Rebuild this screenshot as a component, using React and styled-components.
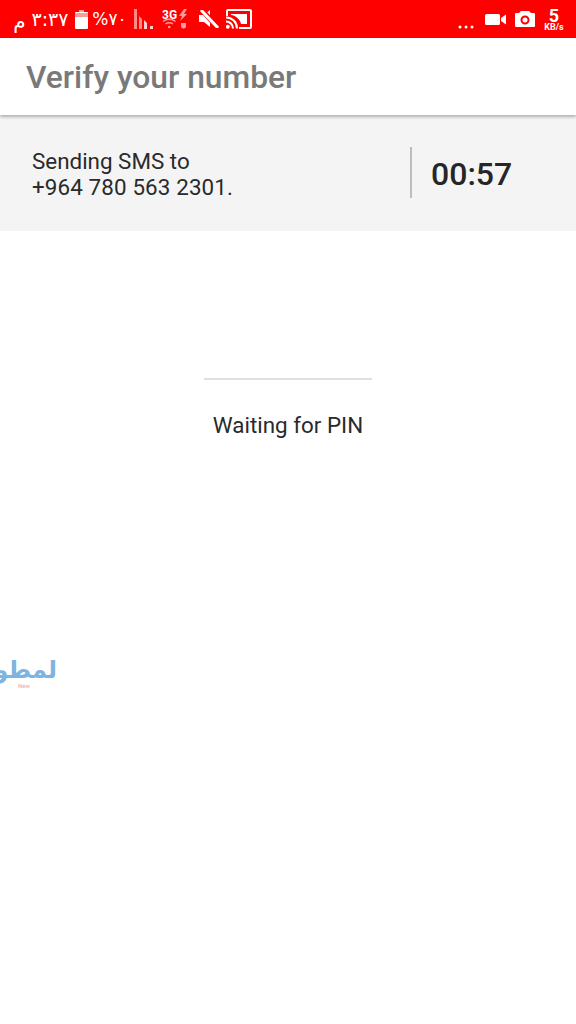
import React from 'react'
import styled, { createGlobalStyle } from 'styled-components'

const Global = createGlobalStyle`
    html, body {
        margin: 0;
        padding: 0;
        background: #fff;
        font-family: Roboto, "Liberation Sans", sans-serif;
    }
`

const Page = styled.div`
    position: relative;
    width: 576px;
    height: 1024px;
    overflow: hidden;
    background: #fff;
`

const StatusBar = styled.div`
    display: flex;
    justify-content: space-between;
    align-items: center;
    height: 38px;
    padding: 0 10px 0 14px;
    background: #fe0000;
    color: #fff;
`

const StatusGroup = styled.div`
    display: flex;
    align-items: center;
`

const StatusItem = styled.div`
    display: flex;
    align-items: center;
    justify-content: center;
    flex: none;
    width: ${props => props.$width}px;
    margin-left: ${props => props.$before || 0}px;
    margin-top: ${props => props.$drop || 0}px;
`

const StatusText = styled.span`
    font-family: "DejaVu Sans", sans-serif;
    font-size: ${props => props.$size || 19}px;
    line-height: 20px;
    white-space: nowrap;
`

const Speed = styled.div`
    display: flex;
    flex-direction: column;
    align-items: center;
    font-weight: 700;
`

const SpeedValue = styled.div`
    font-size: 18px;
    line-height: 21px;
`

const SpeedUnit = styled.div`
    margin-top: -4px;
    font-size: 9px;
    line-height: 11px;
`

const Toolbar = styled.div`
    position: relative;
    display: flex;
    align-items: center;
    height: 77px;
    padding-left: 26px;
    background: #fff;
    box-shadow: 0 2px 3px rgba(0, 0, 0, 0.28);
`

const Title = styled.h1`
    margin: 0;
    padding-top: 1px;
    font-size: 31.8px;
    font-weight: 500;
    color: #797979;
`

const SmsPanel = styled.div`
    display: flex;
    align-items: center;
    box-sizing: border-box;
    height: 116px;
    padding: 0 0 1px 32px;
    background: #f4f4f4;
`

const SmsText = styled.div`
    width: 378px;
    padding-top: 2px;
    font-size: 22.4px;
    line-height: 26px;
    color: #2a2a2a;
`

const PhoneNumber = styled.span`
    letter-spacing: 0.12px;
`

const Timer = styled.div`
    display: flex;
    align-items: center;
    box-sizing: border-box;
    height: 51px;
    padding: 3px 0 0 19px;
    border-left: 2px solid #bdbdbd;
    font-size: 32px;
    font-weight: 500;
    color: #262626;
`

const Waiting = styled.div`
    display: flex;
    flex-direction: column;
    align-items: center;
    padding-top: 147px;
`

const ProgressLine = styled.div`
    width: 168px;
    height: 2px;
    background: #e0e0e0;
`

const WaitingText = styled.div`
    margin-top: 31px;
    font-size: 22.4px;
    line-height: 28px;
    color: #2a2a2a;
`

const Watermark = styled.div`
    position: absolute;
    top: 658px;
    left: -23px;
    width: 80px;
    text-align: right;
    font-family: "DejaVu Sans", sans-serif;
    font-size: 24px;
    font-weight: 700;
    line-height: 24px;
    color: #7fb3e0;
    white-space: nowrap;
`

const WatermarkTag = styled.div`
    position: absolute;
    top: 682px;
    left: 18px;
    font-size: 6px;
    font-weight: 700;
    line-height: 7px;
    color: #f2b8b8;
`

const Battery = () => (
    <svg width="13" height="19" viewBox="0 0 13 19">
        <path d="M4 0h5v2h3a1 1 0 0 1 1 1v15a1 1 0 0 1-1 1H1a1 1 0 0 1-1-1V3a1 1 0 0 1 1-1h3z" fill="#fff" />
        <path d="M0 3h13v4H0z" fill="#ff9a9a" />
        <path d="M4 0h5v2H4z" fill="#ff9a9a" />
    </svg>
)

const Signal = () => (
    <svg width="20" height="20" viewBox="0 0 20 20" fill="#ff8a8a">
        <path d="M0 0h3v20H0z" />
        <path d="M5 7l3 3v10H5z" />
        <path d="M10 11l3 3v6h-3z" fill="#ffd0d0" />
        <path d="M16 17h3v3h-3z" fill="#ffd0d0" />
    </svg>
)

const ThreeG = () => (
    <svg width="28" height="20" viewBox="0 0 28 20">
        <text x="0" y="9.500" fontFamily="Roboto, sans-serif" fontSize="12" fontWeight="700" fill="#fff">3G</text>
        <g fill="none" stroke="#ff9a9a" strokeWidth="1.400">
            <path d="M1 12.500c3.500-3 9-3 12.500 0" />
            <path d="M3.500 15c2-1.600 5.500-1.600 7.500 0" />
        </g>
        <circle cx="7.200" cy="18" r="1.300" fill="#ff9a9a" />
        <path d="M22 0l-5 7h3l-2 5 7-7h-3l3-5z" fill="#ff9a9a" />
        <path d="M19 14h5v3a2.500 2.500 0 0 1-5 0z" fill="#ff9a9a" />
    </svg>
)

const Mute = () => (
    <svg width="20" height="18" viewBox="0 0 20 18">
        <path d="M0 5h5l6-5v17l-6-5H0z" fill="#fff" />
        <path d="M3 0l16 18" stroke="#fe0000" strokeWidth="5" />
        <path d="M2 0l17 18" stroke="#fff" strokeWidth="3" />
    </svg>
)

const Cast = () => (
    <svg width="26" height="20" viewBox="0 0 26 20" fill="none" stroke="#fff">
        <path d="M1 7V2a1 1 0 0 1 1-1h22a1 1 0 0 1 1 1v16a1 1 0 0 1-1 1H13" strokeWidth="2" />
        <path d="M5 5h16v10h-6c-.5-4-5-8.500-10-9z" fill="#fff" stroke="none" />
        <path d="M0 8.500c6 0 11 4.500 11 11" strokeWidth="2" />
        <path d="M0 12.500c4 0 7 3 7 7" strokeWidth="2" />
        <circle cx="1.800" cy="17.800" r="2" fill="#fff" stroke="none" />
    </svg>
)

const Dots = () => (
    <svg width="16" height="20" viewBox="0 0 16 20" fill="#fff">
        <circle cx="2" cy="18" r="1.500" />
        <circle cx="8" cy="18" r="1.500" />
        <circle cx="14" cy="18" r="1.500" />
    </svg>
)

const Video = () => (
    <svg width="21" height="11" viewBox="0 0 21 11" fill="#fff">
        <rect width="15" height="11" rx="1.500" />
        <path d="M16 4l5-3.500v10L16 7z" />
    </svg>
)

const Camera = () => (
    <svg width="20" height="16" viewBox="0 0 20 16">
        <path d="M6 0h8l2 2h3a1 1 0 0 1 1 1v12a1 1 0 0 1-1 1H1a1 1 0 0 1-1-1V3a1 1 0 0 1 1-1h3z" fill="#fff" />
        <circle cx="10" cy="9" r="3.500" fill="none" stroke="#fe0000" strokeWidth="2" />
    </svg>
)

const App = () => (
    <Page>
        <Global />
        <StatusBar>
            <StatusGroup>
                <StatusItem $width={11} $drop={3}><StatusText $size={20}>م</StatusText></StatusItem>
                <StatusItem $width={36} $before={7}><StatusText>٣:٣٧</StatusText></StatusItem>
                <StatusItem $width={13} $before={7}><Battery /></StatusItem>
                <StatusItem $width={31} $before={6}><StatusText $size={17}>%٧٠</StatusText></StatusItem>
                <StatusItem $width={20} $before={9}><Signal /></StatusItem>
                <StatusItem $width={28} $before={8}><ThreeG /></StatusItem>
                <StatusItem $width={20} $before={9}><Mute /></StatusItem>
                <StatusItem $width={26} $before={7}><Cast /></StatusItem>
            </StatusGroup>
            <StatusGroup>
                <StatusItem $width={16}><Dots /></StatusItem>
                <StatusItem $width={21} $before={11}><Video /></StatusItem>
                <StatusItem $width={20} $before={9}><Camera /></StatusItem>
                <StatusItem $width={24} $before={7}>
                    <Speed>
                        <SpeedValue>5</SpeedValue>
                        <SpeedUnit>KB/s</SpeedUnit>
                    </Speed>
                </StatusItem>
            </StatusGroup>
        </StatusBar>
        <Toolbar>
            <Title>Verify your number</Title>
        </Toolbar>
        <SmsPanel>
            <SmsText>Sending SMS to<br /><PhoneNumber>+964 780 563 2301.</PhoneNumber></SmsText>
            <Timer>00:57</Timer>
        </SmsPanel>
        <Waiting>
            <ProgressLine />
            <WaitingText>Waiting for PIN</WaitingText>
        </Waiting>
        <Watermark>لمطور</Watermark>
        <WatermarkTag>New</WatermarkTag>
    </Page>
)

export default App
